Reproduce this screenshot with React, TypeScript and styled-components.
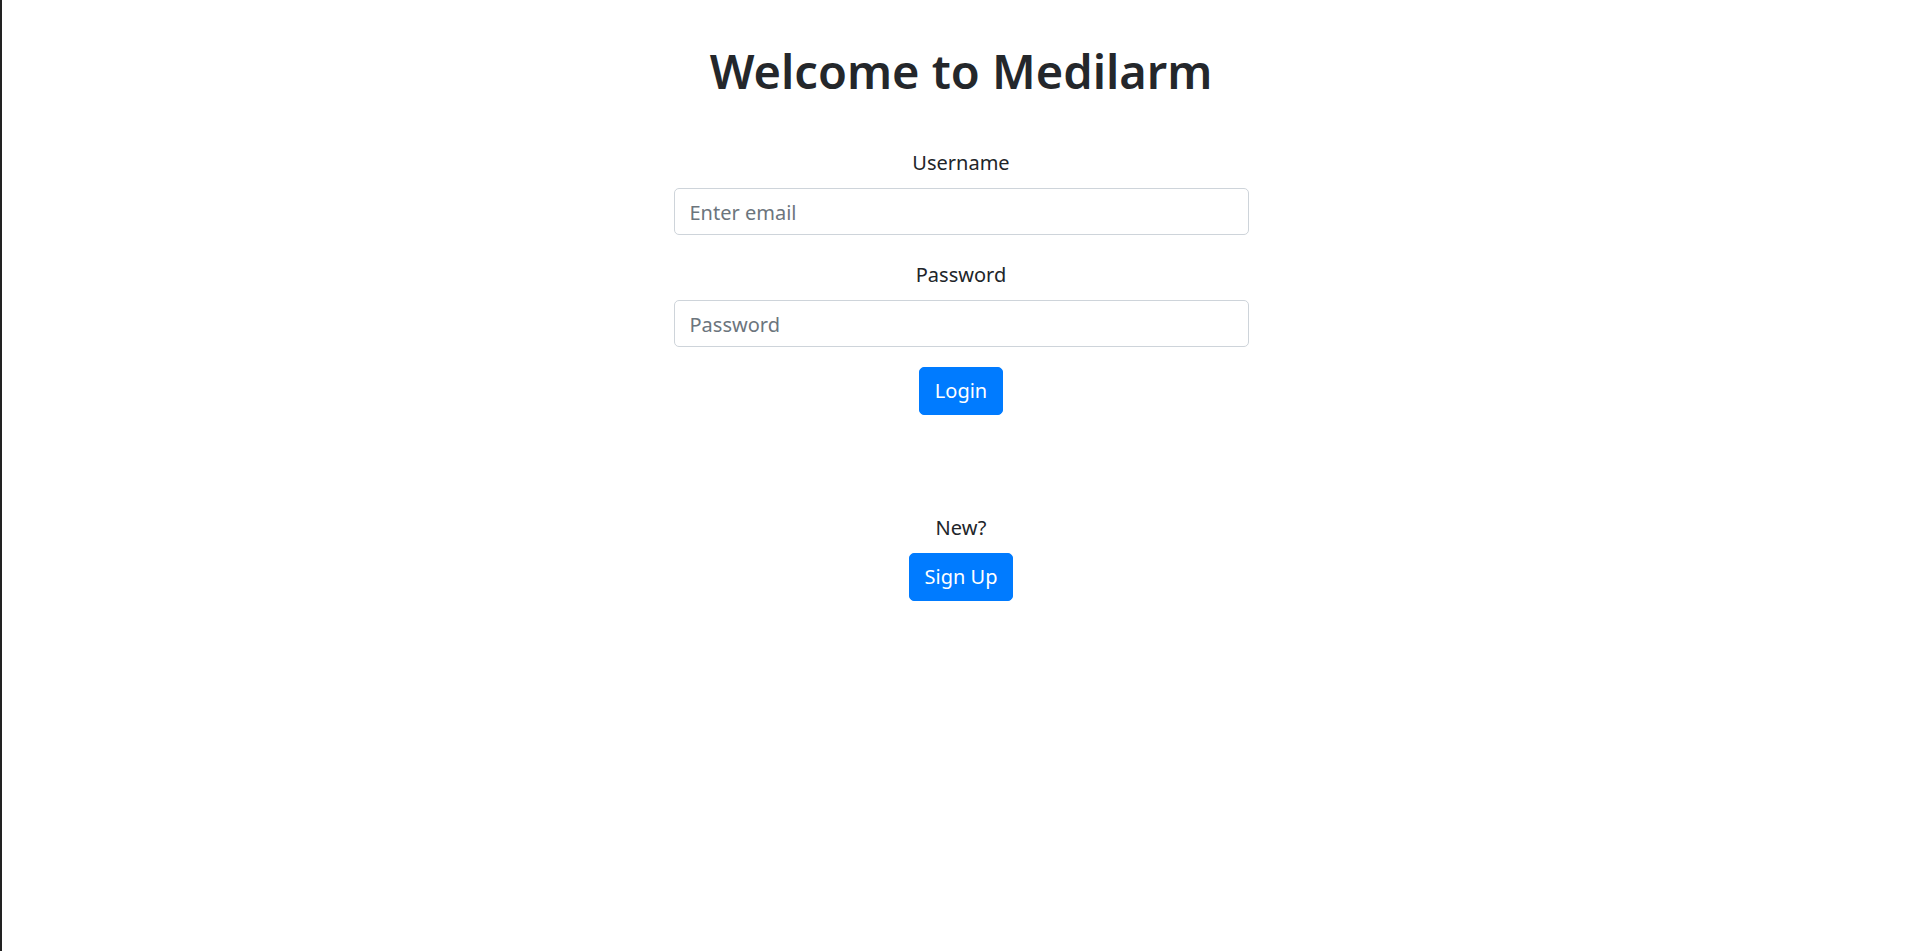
import React from "react";
import styled, { createGlobalStyle } from "styled-components";

const Global = createGlobalStyle`
  html, body { margin: 0; padding: 0; background: #fff; }
  body {
    font-family: "Noto Sans", "Open Sans", "Liberation Sans", sans-serif;
    color: #212529;
    font-size: 20px;
    line-height: 1.5;
  }
  * { box-sizing: border-box; }
`;

const Page = styled.div`
  min-height: 951px;
  border-left: 2px solid #222;
  display: flex;
  flex-direction: column;
  align-items: center;
  padding-top: 41px;
`;

const Title = styled.h1`
  margin: 0 0 42px;
  font-size: 47px;
  font-weight: 600;
  line-height: 60px;
  color: #24272b;
`;

const Form = styled.form`
  width: 575px;
  display: flex;
  flex-direction: column;
  align-items: center;
`;

const Group = styled.div`
  width: 100%;
  display: flex;
  flex-direction: column;
  align-items: center;
  margin-bottom: 20px;
`;

const Label = styled.label`
  font-size: 20px;
  line-height: 30px;
  margin: 5px 0 10px;
  color: #212529;
`;

const Input = styled.input`
  width: 100%;
  height: 47px;
  padding: 7px 15px 5px;
  font-family: inherit;
  font-size: 20px;
  color: #495057;
  border: 1px solid #ced4da;
  border-radius: 5px;
  outline: none;
  &::placeholder { color: #6c757d; }
`;

const Button = styled.button`
  font-family: inherit;
  font-size: 20px;
  line-height: 30px;
  padding: 8px 15px;
  color: #fff;
  background: #007bff;
  border: 1px solid #007bff;
  border-radius: 5px;
  cursor: pointer;
`;

const NewBlock = styled.div`
  margin-top: 98px;
  display: flex;
  flex-direction: column;
  align-items: center;
`;

const NewText = styled.p`
  margin: 0 0 10px;
  font-size: 20px;
  line-height: 30px;
  color: #212529;
`;

export default function App() {
  return (
    <>
      <Global />
      <Page>
        <Title>Welcome to Medilarm</Title>
        <Form onSubmit={(e) => e.preventDefault()}>
          <Group>
            <Label>Username</Label>
            <Input type="email" placeholder="Enter email" />
          </Group>
          <Group>
            <Label>Password</Label>
            <Input type="password" placeholder="Password" />
          </Group>
          <Button type="submit">Login</Button>
        </Form>
        <NewBlock>
          <NewText>New?</NewText>
          <Button type="button">Sign Up</Button>
        </NewBlock>
      </Page>
    </>
  );
}
